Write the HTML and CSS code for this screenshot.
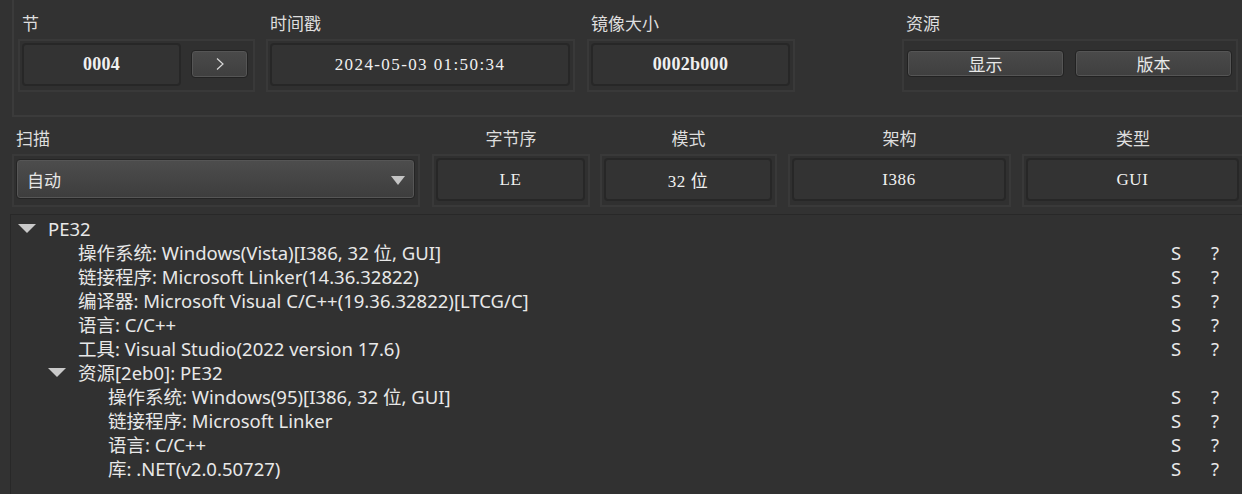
FILE: index.html
```html
<!DOCTYPE html>
<html lang="zh">
<head>
<meta charset="utf-8">
<link rel="stylesheet" href="styles.css">
</head>
<body>
<div class="top">
  <div class="field f-sec">
    <div class="lbl">节</div>
    <div class="frame">
      <div class="box box-sec val bold">0004</div>
      <button class="btn btn-next"><svg width="10" height="14" viewBox="0 0 10 14"><path d="M2 1.5 L8 7 L2 12.5" fill="none" stroke="#d8d8d8" stroke-width="1.2"/></svg></button>
    </div>
  </div>
  <div class="field f-time">
    <div class="lbl">时间戳</div>
    <div class="frame">
      <div class="box val mono">2024-05-03 01:50:34</div>
    </div>
  </div>
  <div class="field f-size">
    <div class="lbl">镜像大小</div>
    <div class="frame">
      <div class="box val bold">0002b000</div>
    </div>
  </div>
  <div class="field f-res">
    <div class="lbl">资源</div>
    <div class="frame frame-btns">
      <button class="btn btn-wide">显示</button>
      <button class="btn btn-wide">版本</button>
    </div>
  </div>
</div>

<div class="row2">
  <div class="field f-scan">
    <div class="lbl">扫描</div>
    <div class="frame frame-combo">
      <div class="combo"><span>自动</span><span class="caret"></span></div>
    </div>
  </div>
  <div class="field f-endian">
    <div class="lbl center">字节序</div>
    <div class="frame"><div class="box val">LE</div></div>
  </div>
  <div class="field f-mode">
    <div class="lbl center">模式</div>
    <div class="frame"><div class="box val">32 位</div></div>
  </div>
  <div class="field f-arch">
    <div class="lbl center">架构</div>
    <div class="frame"><div class="box val">I386</div></div>
  </div>
  <div class="field f-type">
    <div class="lbl center">类型</div>
    <div class="frame"><div class="box val">GUI</div></div>
  </div>
</div>

<div class="tree">
  <div class="trow l0"><span class="arrow open"></span><span class="txt">PE32</span><span class="c1"></span><span class="c2"></span></div>
  <div class="trow l1"><span class="arrow"></span><span class="txt">操作系统: Windows(Vista)[I386, 32 位, GUI]</span><span class="c1">S</span><span class="c2">?</span></div>
  <div class="trow l1"><span class="arrow"></span><span class="txt">链接程序: Microsoft Linker(14.36.32822)</span><span class="c1">S</span><span class="c2">?</span></div>
  <div class="trow l1"><span class="arrow"></span><span class="txt">编译器: Microsoft Visual C/C++(19.36.32822)[LTCG/C]</span><span class="c1">S</span><span class="c2">?</span></div>
  <div class="trow l1"><span class="arrow"></span><span class="txt">语言: C/C++</span><span class="c1">S</span><span class="c2">?</span></div>
  <div class="trow l1"><span class="arrow"></span><span class="txt">工具: Visual Studio(2022 version 17.6)</span><span class="c1">S</span><span class="c2">?</span></div>
  <div class="trow l1"><span class="arrow open"></span><span class="txt">资源[2eb0]: PE32</span><span class="c1"></span><span class="c2"></span></div>
  <div class="trow l2"><span class="arrow"></span><span class="txt">操作系统: Windows(95)[I386, 32 位, GUI]</span><span class="c1">S</span><span class="c2">?</span></div>
  <div class="trow l2"><span class="arrow"></span><span class="txt">链接程序: Microsoft Linker</span><span class="c1">S</span><span class="c2">?</span></div>
  <div class="trow l2"><span class="arrow"></span><span class="txt">语言: C/C++</span><span class="c1">S</span><span class="c2">?</span></div>
  <div class="trow l2"><span class="arrow"></span><span class="txt">库: .NET(v2.0.50727)</span><span class="c1">S</span><span class="c2">?</span></div>
</div>
</body>
</html>
```

FILE: styles.css
```css
* { box-sizing: border-box; }
html, body { margin: 0; padding: 0; }
body {
  width: 1242px;
  height: 494px;
  overflow: hidden;
  background: #323232;
  color: #e2e2e2;
  font-family: "Noto Sans", "Noto Sans CJK SC", sans-serif;
  font-size: 17px;
}

/* ---------- top group ---------- */
.top {
  margin-left: 12px;
  height: 117px;
  border-left: 2px solid #3b3b3b;
  border-bottom: 2px solid #3b3b3b;
  display: flex;
  align-items: flex-start;
  padding: 12px 0 0 4px;
}
.field { display: flex; flex-direction: column; flex: none; }
.lbl {
  height: 22px;
  line-height: 22px;
  margin-bottom: 5px;
  padding-left: 4px;
  font-family: "Noto Sans CJK SC", sans-serif;
  font-size: 17px;
  color: #dedede;
}
.lbl.center { padding-left: 0; text-align: center; }

.frame {
  height: 53px;
  border: 2px solid #393939;
  background: #303030;
  padding: 2px 3px 4px 2px;
  display: flex;
  align-items: stretch;
}
.box {
  flex: 1;
  border: 2px solid #272727;
  border-radius: 4px;
  background: #333333;
  display: flex;
  align-items: center;
  justify-content: center;
}
.val {
  font-family: "Liberation Serif", "Noto Sans CJK SC", serif;
  font-size: 17px;
  color: #f0f0f0;
  letter-spacing: 0.6px;
}
.bold { font-weight: bold; font-size: 18px; letter-spacing: 0.3px; }
.mono { letter-spacing: 1.4px; }

.f-sec { width: 237px; }
.f-time { width: 309px; margin-left: 11px; }
.f-size { width: 208px; margin-left: 12px; }
.f-res { width: 336px; margin-left: 107px; }

.box-sec { flex: none; width: 159px; }

.btn {
  font-family: "Noto Sans CJK SC", sans-serif;
  font-size: 17px;
  color: #e8e8e8;
  border: 1px solid #222;
  border-radius: 4px;
  background: linear-gradient(#4a4a4a, #3f3f3f);
  box-shadow: inset 0 0 0 1px #555;
  padding: 0;
  display: flex;
  align-items: center;
  justify-content: center;
}
.btn-next {
  width: 57px;
  height: 28px;
  margin: 7px 0 0 10px;
}
.frame-btns { padding: 9px 4px 13px 3px; gap: 11px; }
.btn-wide { width: 157px; height: 27px; }

/* ---------- second row ---------- */
.row2 {
  display: flex;
  padding: 10px 0 0 12px;
}
.f-scan { width: 408px; }
.f-scan .lbl { padding-left: 4px; }
.f-endian { width: 158px; margin-left: 12px; }
.f-mode { width: 177px; margin-left: 10px; }
.f-arch { width: 223px; margin-left: 11px; }
.f-type { width: 222px; margin-left: 11px; }

.frame-combo { padding: 3px 3px 6px 2px; }
.combo {
  flex: 1;
  border: 1px solid #242424;
  border-radius: 4px;
  background: linear-gradient(#4d4d4d, #3d3d3d);
  box-shadow: inset 0 0 0 1px #565656;
  display: flex;
  align-items: center;
  justify-content: space-between;
  padding: 0 9px 0 10px;
  font-family: "Noto Sans CJK SC", sans-serif;
  font-size: 17px;
  color: #e6e6e6;
}
.caret {
  width: 0;
  height: 0;
  border-left: 7px solid transparent;
  border-right: 7px solid transparent;
  border-top: 9px solid #c4c4c4;
  margin-top: 2px;
}

/* ---------- tree ---------- */
.tree {
  margin: 7px 0 0 10px;
  height: 290px;
  border-top: 1px solid #282828;
  border-left: 1px solid #282828;
  background: #313131;
  padding-top: 1px;
}
.trow {
  display: flex;
  align-items: center;
  height: 24px;
  white-space: nowrap;
  color: #e8e8e8;
  font-size: 18.5px;
}
.l0 { padding-left: 7px; }
.l1 { padding-left: 37px; }
.l2 { padding-left: 67px; }
.arrow {
  flex: none;
  width: 30px;
  height: 24px;
  position: relative;
}
.arrow.open::before {
  content: "";
  position: absolute;
  left: 0;
  top: 8px;
  border-left: 9px solid transparent;
  border-right: 9px solid transparent;
  border-top: 9px solid #c9c9c9;
}
.txt { flex: 1; }
.c1 { flex: none; width: 40px; }
.c2 { flex: none; width: 31px; }
```
